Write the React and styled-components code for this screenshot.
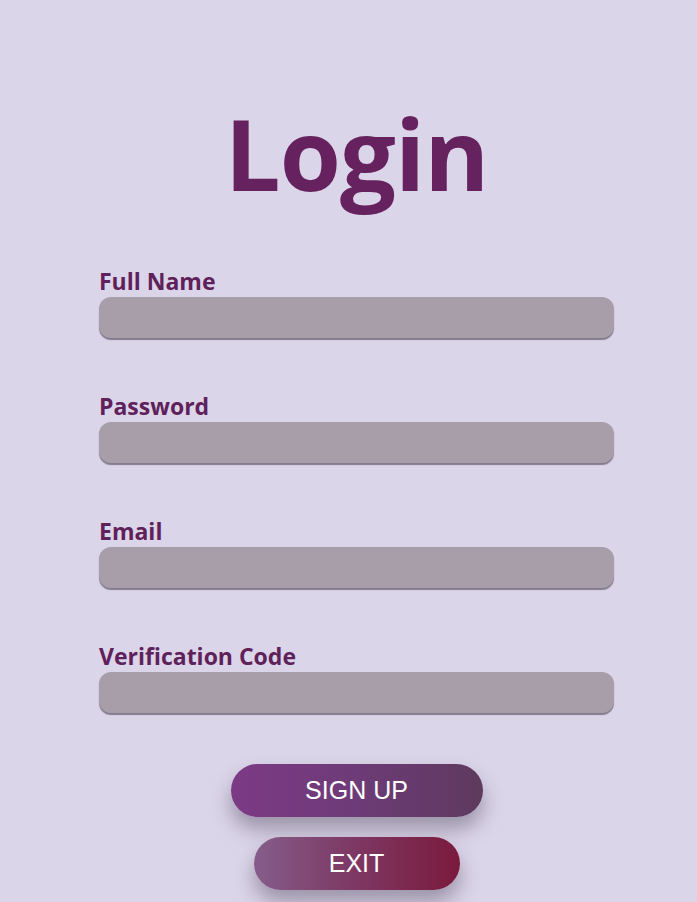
import React from "react";
import styled, { createGlobalStyle } from "styled-components";

const GlobalStyle = createGlobalStyle`
  html, body {
    margin: 0;
    padding: 0;
    background: #dbd5e9;
  }
`;

const fields = ["Full Name", "Password", "Email", "Verification Code"];

export default function App() {
  return (
    <>
      <GlobalStyle />
      <Page>
        <Title>Login</Title>
        <Form>
          {fields.map((f) => (
            <Field key={f}>
              <Label>{f}</Label>
              <Input type={f === "Password" ? "password" : "text"} />
            </Field>
          ))}
        </Form>
        <Buttons>
          <Button $wide>SIGN UP</Button>
          <Button $exit>EXIT</Button>
        </Buttons>
      </Page>
    </>
  );
}

const Page = styled.div`
  box-sizing: border-box;
  width: 697px;
  height: 902px;
  padding-left: 16px;
  display: flex;
  flex-direction: column;
  align-items: center;
  font-family: "Open Sans", "Noto Sans", sans-serif;
  overflow: hidden;
`;

const Title = styled.h1`
  margin: 103px 0 0;
  font-size: 99px;
  line-height: 1;
  font-weight: 700;
  color: #65225f;
  letter-spacing: -1px;
`;

const Form = styled.div`
  width: 515px;
  margin-top: 67px;
  display: flex;
  flex-direction: column;
  gap: 56px;
`;

const Field = styled.div`
  display: flex;
  flex-direction: column;
`;

const Label = styled.label`
  font-size: 23px;
  line-height: 24px;
  font-weight: 700;
  color: #5f2159;
  height: 28px;
`;

const Input = styled.input`
  box-sizing: border-box;
  width: 100%;
  height: 41px;
  border: none;
  border-radius: 12px;
  background: #a89ea9;
  box-shadow: 0 2px 1px rgba(60, 50, 65, 0.55);
  outline: none;
`;

const Buttons = styled.div`
  margin-top: 51px;
  display: flex;
  flex-direction: column;
  align-items: center;
  gap: 20px;
`;

const Button = styled.button`
  width: ${({ $wide }) => ($wide ? "252px" : "206px")};
  height: 53px;
  border: none;
  border-radius: 27px;
  color: #fff;
  font-family: "Liberation Sans", Arial, sans-serif;
  font-size: 25px;
  cursor: pointer;
  background: ${({ $exit }) =>
    $exit
      ? "linear-gradient(90deg, #855d8a 0%, #7e3a66 45%, #7a1a3c 100%)"
      : "linear-gradient(90deg, #7d3a86 0%, #6d3b77 50%, #5e3a5e 100%)"};
  box-shadow: 0 12px 20px rgba(60, 50, 70, 0.4);
`;
